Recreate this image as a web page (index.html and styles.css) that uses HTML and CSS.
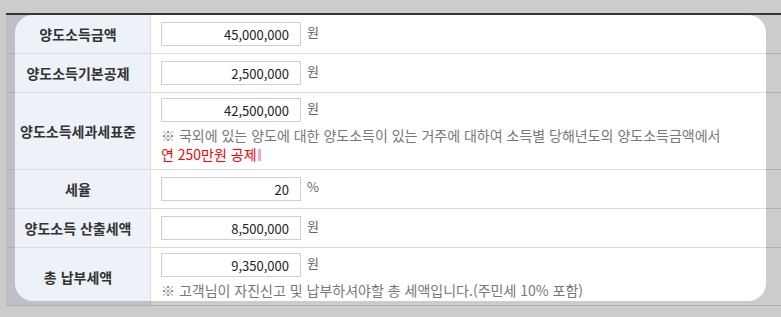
FILE: index.html
```html
<!DOCTYPE html>
<html lang="ko">
<head>
<meta charset="utf-8">
<title>양도소득세 계산</title>
<link rel="stylesheet" href="styles.css">
</head>
<body>
<div class="stage">
  <table class="calc">
    <tr>
      <th>양도소득금액</th>
      <td class="single"><div class="line"><span class="field">45,000,000</span><span class="unit">원</span></div></td>
    </tr>
    <tr>
      <th>양도소득기본공제</th>
      <td class="single"><div class="line"><span class="field">2,500,000</span><span class="unit">원</span></div></td>
    </tr>
    <tr>
      <th>양도소득세과세표준</th>
      <td class="multi">
        <div class="line"><span class="field">42,500,000</span><span class="unit">원</span></div>
        <p class="note">※ 국외에 있는 양도에 대한 양도소득이 있는 거주에 대하여 소득별 당해년도의 양도소득금액에서<br><span class="red">연 250만원 공제</span><span class="caret"></span></p>
      </td>
    </tr>
    <tr>
      <th>세율</th>
      <td class="single"><div class="line"><span class="field">20</span><span class="unit">%</span></div></td>
    </tr>
    <tr>
      <th>양도소득 산출세액</th>
      <td class="single"><div class="line"><span class="field">8,500,000</span><span class="unit">원</span></div></td>
    </tr>
    <tr>
      <th>총 납부세액</th>
      <td class="multi">
        <div class="line"><span class="field">9,350,000</span><span class="unit">원</span></div>
        <p class="note">※ 고객님이 자진신고 및 납부하셔야할 총 세액입니다.(주민세 10% 포함)</p>
      </td>
    </tr>
  </table>
  <div class="spotlight"></div>
</div>
</body>
</html>
```
FILE: styles.css
```css
html, body {
  margin: 0;
  padding: 0;
  background: #ffffff;
  overflow: hidden;
}
body {
  font-family: "Noto Sans CJK KR", "Noto Sans", sans-serif;
  font-size: 13px;
  color: #333;
}
.stage {
  position: relative;
  width: 781px;
  height: 317px;
  padding: 13px 0 0 6px;
  box-sizing: border-box;
}
.calc {
  width: 800px;
  border-collapse: separate;
  border-spacing: 0;
  border-top: 2px solid #444;
}
.calc th {
  width: 145px;
  box-sizing: border-box;
  background: #edf2f9;
  border-right: 1px solid #dddddd;
  border-bottom: 1px solid #dddddd;
  font-weight: bold;
  font-size: 14px;
  color: #333;
  text-align: center;
  vertical-align: middle;
  padding: 0 2px;
  white-space: nowrap;
}
.calc td {
  border-bottom: 1px solid #dddddd;
  padding: 5px 10px;
  vertical-align: middle;
  background: #fff;
}
.calc td.single {
  padding: 7px 10px;
}
.line {
  display: flex;
  align-items: flex-start;
  height: 24px;
}
.field {
  display: inline-block;
  box-sizing: border-box;
  width: 140px;
  height: 24px;
  border: 1px solid #cfcfcf;
  padding: 1px 11px 0 0;
  line-height: 22px;
  text-align: right;
  font-size: 13px;
  color: #222;
}
.unit {
  margin-left: 6px;
  line-height: 19px;
  color: #666;
  font-size: 13px;
}
.note {
  margin: 4px 0 0;
  line-height: 19px;
  color: #777;
  font-size: 14px;
  white-space: nowrap;
}
.red {
  color: #ff0000;
}
.caret {
  display: inline-block;
  width: 3px;
  height: 12px;
  margin-left: 1px;
  vertical-align: -1px;
  background: #f6a4c8;
}
.spotlight {
  position: absolute;
  left: 15px;
  top: 15px;
  width: 751px;
  height: 286px;
  border-radius: 18px;
  box-shadow: 0 0 0 2000px rgba(0, 0, 0, 0.2);
  pointer-events: none;
}
```
